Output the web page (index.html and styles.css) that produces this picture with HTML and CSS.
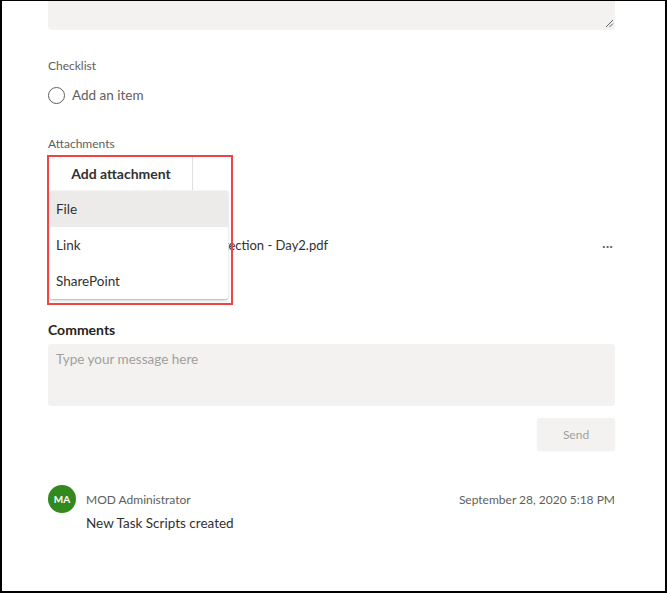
FILE: index.html
```html
<!DOCTYPE html>
<html>
<head>
<meta charset="utf-8">
<link rel="stylesheet" href="styles.css">
</head>
<body>
<div class="frame">
  <div class="content">
    <div class="notes">
      <svg class="grip" width="9" height="9" viewBox="0 0 9 9"><path d="M8 1 L1 8 M8 4.5 L4.5 8" stroke="#605e5c" stroke-width="1" fill="none"/></svg>
    </div>

    <div class="label checklist-label">Checklist</div>
    <div class="check-row">
      <span class="radio"></span>
      <span class="add-item">Add an item</span>
    </div>

    <div class="label attach-label">Attachments</div>
    <div class="attach-area">
      <button class="add-btn">Add attachment</button>
      <div class="file-row">
        <span class="file-name">Microsoft Information Protection - Day2.pdf</span>
        <span class="more">···</span>
      </div>
      <div class="menu">
        <div class="menu-item active">File</div>
        <div class="menu-item">Link</div>
        <div class="menu-item">SharePoint</div>
      </div>
      <div class="highlight"></div>
    </div>

    <div class="section-title">Comments</div>
    <div class="comment-box">Type your message here</div>
    <div class="send-row"><button class="send">Send</button></div>

    <div class="comment">
      <div class="avatar">MA</div>
      <div class="comment-body">
        <div class="comment-head">
          <span class="author">MOD Administrator</span>
          <span class="date">September 28, 2020 5:18 PM</span>
        </div>
        <div class="comment-text">New Task Scripts created</div>
      </div>
    </div>
  </div>
</div>
</body>
</html>
```

FILE: styles.css
```css
* { box-sizing: border-box; }
html, body { margin: 0; padding: 0; background: #fff; }
body {
  font-family: "Segoe UI", Lato, "Open Sans", sans-serif;
  color: #323130;
}
.frame {
  width: 667px;
  height: 593px;
  border-top: 1px solid #000;
  border-left: 2px solid #000;
  border-right: 2px solid #000;
  border-bottom: 2px solid #000;
  overflow: hidden;
}
.content {
  margin-left: 46px;
  width: 567px;
  display: flex;
  flex-direction: column;
}
.notes {
  height: 29px;
  background: #f3f2f1;
  border-radius: 0 0 4px 4px;
  position: relative;
}
.grip { position: absolute; right: 1px; bottom: 2px; }
.label {
  font-size: 12px;
  color: #605e5c;
  line-height: 16px;
}
.checklist-label { margin-top: 28px; }
.check-row {
  display: flex;
  align-items: center;
  gap: 7px;
  margin-top: 11px;
  height: 20px;
}
.radio {
  width: 17px;
  height: 17px;
  border: 1px solid #605e5c;
  border-radius: 50%;
}
.add-item { font-size: 13.5px; color: #605e5c; }
.attach-label { margin-top: 31px; }
.attach-area {
  position: relative;
  margin-top: 5px;
  height: 150px;
}
.add-btn {
  display: block;
  margin-left: 2px;
  width: 142px;
  height: 33px;
  border: none;
  background: #fff;
  font-family: inherit;
  font-size: 14px;
  font-weight: 700;
  color: #323130;
  box-shadow: 1px 0 0 #e1dfdd;
}
.file-row {
  display: flex;
  align-items: center;
  justify-content: space-between;
  margin-top: 45px;
  height: 20px;
}
.file-name { font-size: 13px; color: #323130; margin-left: 28px; }
.more { color: #605e5c; font-size: 14px; margin-right: 2px; }
.menu {
  position: absolute;
  left: 2px;
  top: 34px;
  width: 178px;
  background: #fff;
  box-shadow: 0 1.6px 3.6px rgba(0,0,0,.16), 0 0.3px 0.9px rgba(0,0,0,.12);
  border-radius: 2px;
}
.menu-item {
  height: 36px;
  line-height: 36px;
  padding-left: 6px;
  font-size: 13.5px;
  color: #323130;
}
.menu-item.active { background: #edebe9; }
.highlight {
  position: absolute;
  left: -1px;
  top: -2px;
  width: 186px;
  height: 150px;
  border: 2px solid #f04343;
  pointer-events: none;
}
.section-title {
  margin-top: 13px;
  font-size: 14px;
  font-weight: 700;
  color: #252423;
  line-height: 20px;
}
.comment-box {
  margin-top: 4px;
  height: 62px;
  background: #f3f2f1;
  border-radius: 3px;
  padding: 7px 8px;
  font-size: 13.5px;
  color: #a19f9d;
}
.send-row { display: flex; justify-content: flex-end; margin-top: 12px; }
.send {
  width: 78px;
  height: 32px;
  border: none;
  background: #f3f2f1;
  border-radius: 2px;
  font-family: inherit;
  font-size: 12px;
  color: #a19f9d;
  box-shadow: 0 1px 2px rgba(0,0,0,.06);
}
.comment {
  display: flex;
  gap: 10px;
  margin-top: 35px;
}
.avatar {
  width: 28px;
  height: 28px;
  border-radius: 50%;
  background: #328a1f;
  color: #fff;
  font-size: 10px;
  font-weight: 700;
  display: flex;
  align-items: center;
  justify-content: center;
  flex: none;
}
.comment-body { flex: 1; }
.comment-head {
  display: flex;
  justify-content: space-between;
  font-size: 12px;
  color: #605e5c;
  line-height: 16px;
  margin-top: 7px;
}
.comment-text {
  margin-top: 7px;
  font-size: 13.5px;
  color: #323130;
}
```
